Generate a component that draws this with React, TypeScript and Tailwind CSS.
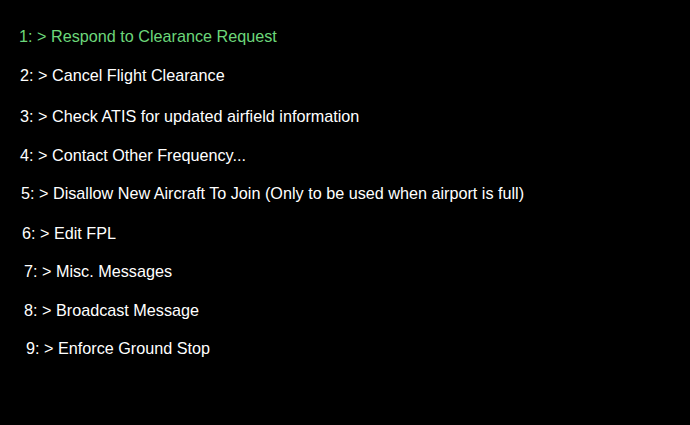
import React from "react";

interface MenuItem {
  label: string;
  className: string;
}

// row heights follow the uneven spacing of the original menu
const items: MenuItem[] = [
  { label: "1: > Respond to Clearance Request", className: "h-[39px] pl-[19px] text-[#6cd77a]" },
  { label: "2: > Cancel Flight Clearance", className: "h-[41px] pl-[20px]" },
  { label: "3: > Check ATIS for updated airfield information", className: "h-[39px] pl-[20px]" },
  { label: "4: > Contact Other Frequency...", className: "h-[38px] pl-[20px]" },
  { label: "5: > Disallow New Aircraft To Join (Only to be used when airport is full)", className: "h-[40px] pl-[21px]" },
  { label: "6: > Edit FPL", className: "h-[38px] pl-[22px]" },
  { label: "7: > Misc. Messages", className: "h-[39px] pl-[24px]" },
  { label: "8: > Broadcast Message", className: "h-[38px] pl-[24px]" },
  { label: "9: > Enforce Ground Stop", className: "h-[38px] pl-[26px]" },
];

const App: React.FC = () => {
  return (
    <div className="w-[690px] h-[425px] bg-black text-white font-['Liberation_Sans',Arial,sans-serif] pt-[24px]">
      <ul className="flex flex-col">
        {items.map((item) => (
          <li key={item.label} className={`text-[16.2px] leading-[24px] ${item.className}`}>
            {item.label}
          </li>
        ))}
      </ul>
    </div>
  );
};

export default App;
